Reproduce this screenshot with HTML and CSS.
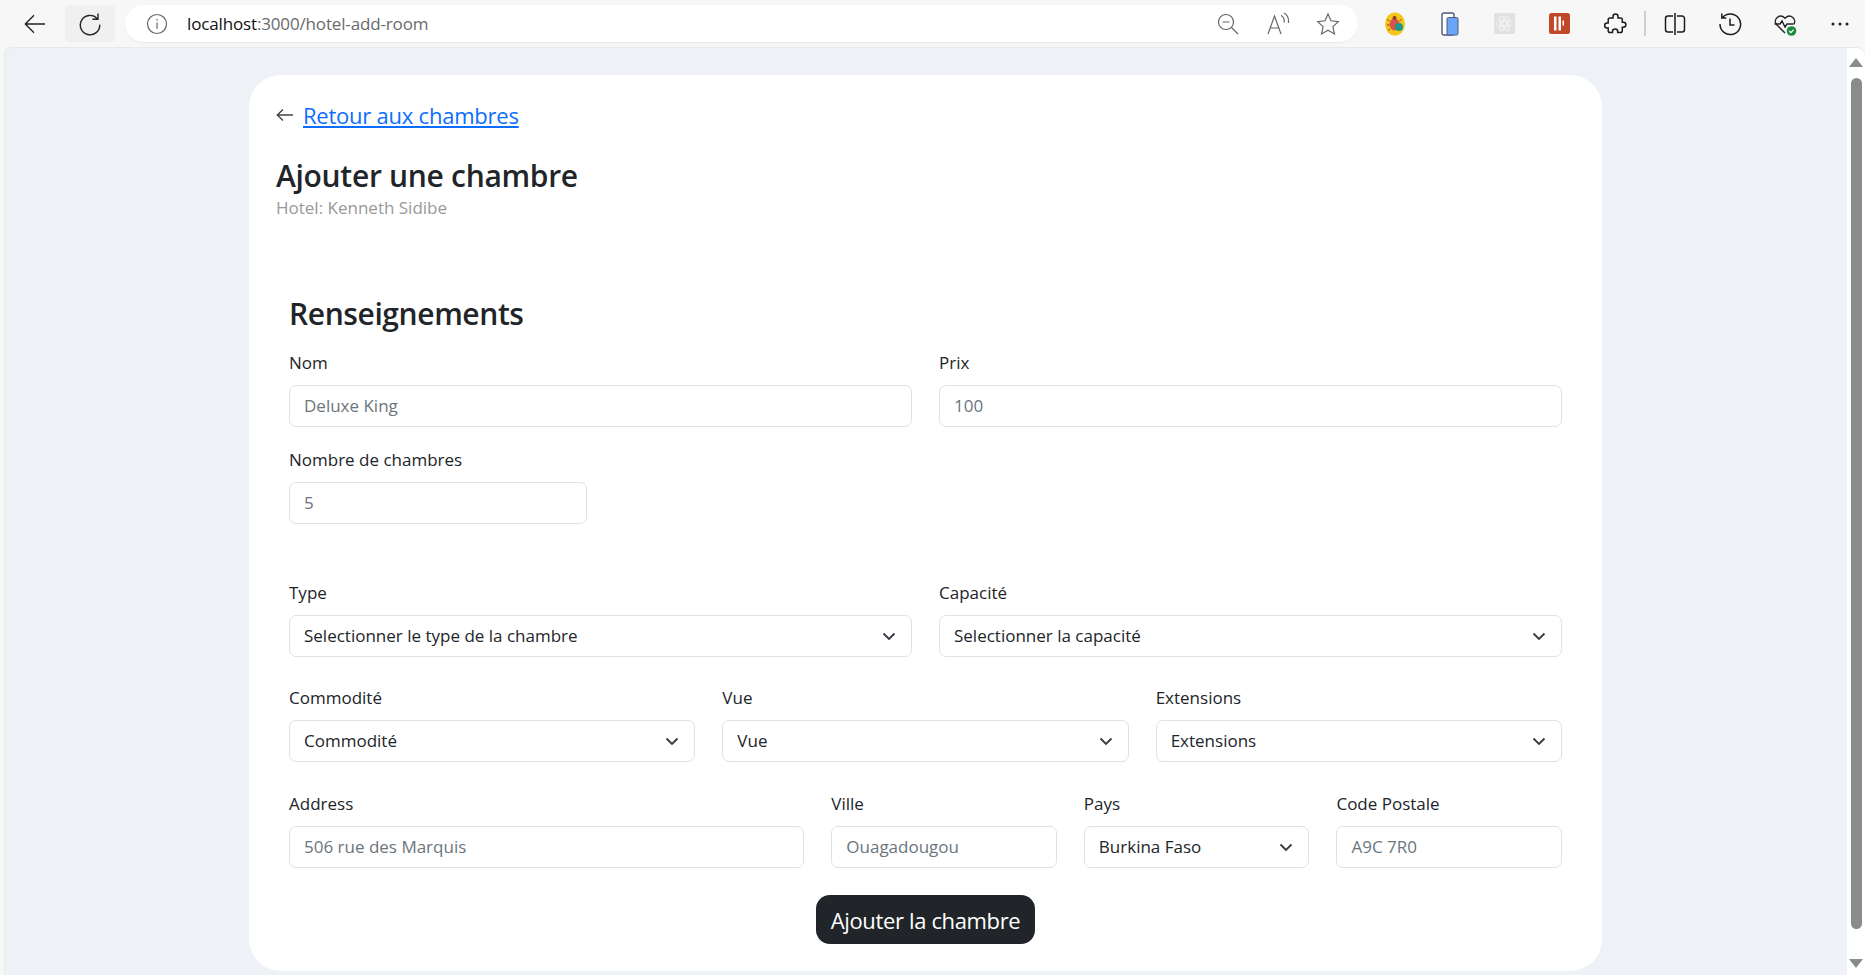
FILE: index.html
```html
<!DOCTYPE html>
<html lang="fr">
<head>
    <meta charset="UTF-8">
    <meta name="viewport" content="width=device-width, initial-scale=1.0">
    <title>Ajouter une chambre</title>
    <link rel="stylesheet" href="styles.css">
</head>
<body>
    <header class="toolbar">
        <div class="tool tool-back">
            <svg width="24" height="24" viewBox="0 0 24 24" class="ico"><path d="M22 12H2.500M11 3.200 2.300 12l8.700 8.800"/></svg>
        </div>
        <div class="tool tool-reload">
            <svg width="24" height="24" viewBox="0 0 24 24" class="ico"><path d="M19.200 6.600A9.700 9.700 0 1 0 21.700 12.600M20 1.600v5.600h-5.600"/></svg>
        </div>
        <div class="address">
            <svg width="22" height="22" viewBox="0 0 22 22" class="ico ico-grey"><circle cx="11" cy="11" r="9.500"/><path d="M11 9.600v6.200M11 6v1.500"/></svg>
            <span class="url"><b>localhost</b>:3000/hotel-add-room</span>
            <div class="address-tools">
                <div class="addr-tool">
                    <svg width="24" height="24" viewBox="0 0 24 24" class="ico ico-grey"><circle cx="10" cy="10" r="7.500"/><path d="M6.500 10h7M15.500 15.500l6.500 6.500"/></svg>
                </div>
                <div class="addr-tool">
                    <svg width="24" height="24" viewBox="0 0 24 24" class="ico ico-grey"><path d="M2 22 8.500 4l6.500 18M4.400 16h8.200M15 3.500c2.500 1.200 3.500 3.500 3.200 7M18 1c3.400 1.800 5 5.400 4.400 10"/></svg>
                </div>
                <div class="addr-tool">
                    <svg width="24" height="24" viewBox="0 0 24 24" class="ico ico-grey"><path d="m12 2 3 6.800 7.300.8-5.400 5 1.500 7.300L12 18.200l-6.400 3.700 1.500-7.300-5.400-5 7.300-.8z"/></svg>
                </div>
            </div>
        </div>
        <div class="tool">
            <svg width="22" height="24" viewBox="0 0 22 24"><ellipse cx="11" cy="12" rx="10" ry="11.500" fill="#f5c71a"/><ellipse cx="10.500" cy="12.500" rx="5" ry="6" fill="#d9534f"/><circle cx="10.500" cy="6" r="2" fill="#8a3b2e"/><path d="M5.500 9 3.300 7.500M5.500 13H3M6 17l-2 1.500M15.500 9l2-1.500" stroke="#8a3b2e" fill="none"/><circle cx="15" cy="15" r="4" fill="#1a9b8a"/></svg>
        </div>
        <div class="tool">
            <svg width="18" height="24" viewBox="0 0 18 24"><rect x="1" y="1" width="12" height="22" rx="2" fill="#fff" stroke="#4a5878" stroke-width="1.400"/><rect x="6" y="5.500" width="11" height="17.500" rx="1.500" fill="#6aa5f8" stroke="#4a5878" stroke-width="1"/></svg>
        </div>
        <div class="tool">
            <svg width="21" height="21" viewBox="0 0 21 21"><rect width="21" height="21" rx="1" fill="#e1e1e1"/><g fill="none" stroke="#f4f4f4"><ellipse cx="10.500" cy="10.500" rx="8" ry="3.200"/><ellipse cx="10.500" cy="10.500" rx="8" ry="3.200" transform="rotate(60 10.500 10.500)"/><ellipse cx="10.500" cy="10.500" rx="8" ry="3.200" transform="rotate(120 10.500 10.500)"/><circle cx="10.500" cy="10.500" r="2"/></g></svg>
        </div>
        <div class="tool">
            <svg width="21" height="21" viewBox="0 0 21 21"><rect width="21" height="21" rx="2.500" fill="#c0492a"/><path d="M5 3.500h2.500v14H5zM9.500 3.500H12v14H9.500zM13.500 7.500H15v5h-1.500z" fill="#fff"/></svg>
        </div>
        <div class="tool">
            <svg width="24" height="24" viewBox="0 0 24 24" class="ico ico-strong"><path d="M10 4.500c0-3.400 5-3.400 5 0V6h2.500a1.800 1.800 0 0 1 1.800 1.800v2.400h1c3.400 0 3.400 5 0 5h-1v3.500a1.800 1.800 0 0 1-1.800 1.800h-2.800v-1c0-3.200-5.200-3.200-5.200 0v1H7a1.800 1.800 0 0 1-1.800-1.800V16h-1c-3.400 0-3.400-5 0-5h1V7.800A1.800 1.800 0 0 1 7 6h3z"/></svg>
        </div>
        <span class="tool-sep"></span>
        <div class="tool">
            <svg width="24" height="24" viewBox="0 0 24 24" class="ico ico-strong"><path d="M10 4H5a2.500 2.500 0 0 0-2.500 2.500v11A2.500 2.500 0 0 0 5 20h5M14 4h5a2.500 2.500 0 0 1 2.500 2.500v11A2.500 2.500 0 0 1 19 20h-5M12 1v22"/></svg>
        </div>
        <div class="tool">
            <svg width="24" height="24" viewBox="0 0 24 24" class="ico ico-strong"><path d="M4.500 5.500A10.300 10.300 0 1 1 2 12M3.800 1.500v4.500h4.500M12 6.500v6.500h4.500"/></svg>
        </div>
        <div class="tool">
            <svg width="24" height="24" viewBox="0 0 24 24"><path d="M12 21 3.500 12.500C-.5 8 6.500 .5 12 6.200c5.500-5.700 12.500 1.800 8.500 6.300" fill="none" stroke="#222" stroke-width="1.400"/><path d="M1.500 12h5.500l2-3 3 6 2-3h6" fill="none" stroke="#222" stroke-width="1.400"/><circle cx="18.500" cy="19" r="4.800" fill="#1e8a3c"/><path d="m16.300 19 1.600 1.600 2.800-3" fill="none" stroke="#fff" stroke-width="1.200"/></svg>
        </div>
        <div class="tool">
            <svg width="20" height="6" viewBox="0 0 20 6" fill="#222"><circle cx="3" cy="3" r="1.500"/><circle cx="10" cy="3" r="1.500"/><circle cx="17" cy="3" r="1.500"/></svg>
        </div>
    </header>

    <div class="frame">
        <main class="viewport">
            <div class="card">
                <div class="back-row">
                    <svg width="18" height="14" viewBox="0 0 18 14" class="back-arrow"><path d="M17 7H1.500M7 1.500 1.300 7 7 12.500"/></svg>
                    <a href="#" class="back-link">Retour aux chambres</a>
                </div>
                <h1 class="title">Ajouter une chambre</h1>
                <p class="subtitle">Hotel: Kenneth Sidibe</p>

                <form class="room-form">
                    <h2 class="section-title">Renseignements</h2>

                    <div class="row row-2 row-first">
                        <div class="field">
                            <label for="nom">Nom</label>
                            <input id="nom" type="text" placeholder="Deluxe King">
                        </div>
                        <div class="field">
                            <label for="prix">Prix</label>
                            <input id="prix" type="text" placeholder="100">
                        </div>
                    </div>
                    <div class="row row-4">
                        <div class="field">
                            <label for="nombre">Nombre de chambres</label>
                            <input id="nombre" type="text" placeholder="5">
                        </div>
                    </div>

                    <div class="row row-2 row-spaced">
                        <div class="field">
                            <label for="type">Type</label>
                            <div class="select-box">
                                <select id="type"><option>Selectionner le type de la chambre</option></select>
                                <svg width="16" height="16" viewBox="0 0 16 16" class="chevron"><path d="m2.500 5.500 5.500 5.500 5.500-5.500"/></svg>
                            </div>
                        </div>
                        <div class="field">
                            <label for="capacite">Capacité</label>
                            <div class="select-box">
                                <select id="capacite"><option>Selectionner la capacité</option></select>
                                <svg width="16" height="16" viewBox="0 0 16 16" class="chevron"><path d="m2.500 5.500 5.500 5.500 5.500-5.500"/></svg>
                            </div>
                        </div>
                    </div>

                    <div class="row row-3">
                        <div class="field">
                            <label for="commodite">Commodité</label>
                            <div class="select-box">
                                <select id="commodite"><option>Commodité</option></select>
                                <svg width="16" height="16" viewBox="0 0 16 16" class="chevron"><path d="m2.500 5.500 5.500 5.500 5.500-5.500"/></svg>
                            </div>
                        </div>
                        <div class="field">
                            <label for="vue">Vue</label>
                            <div class="select-box">
                                <select id="vue"><option>Vue</option></select>
                                <svg width="16" height="16" viewBox="0 0 16 16" class="chevron"><path d="m2.500 5.500 5.500 5.500 5.500-5.500"/></svg>
                            </div>
                        </div>
                        <div class="field">
                            <label for="extensions">Extensions</label>
                            <div class="select-box">
                                <select id="extensions"><option>Extensions</option></select>
                                <svg width="16" height="16" viewBox="0 0 16 16" class="chevron"><path d="m2.500 5.500 5.500 5.500 5.500-5.500"/></svg>
                            </div>
                        </div>
                    </div>

                    <div class="row row-address">
                        <div class="field">
                            <label for="address">Address</label>
                            <input id="address" type="text" placeholder="506 rue des Marquis">
                        </div>
                        <div class="field">
                            <label for="ville">Ville</label>
                            <input id="ville" type="text" placeholder="Ouagadougou">
                        </div>
                        <div class="field">
                            <label for="pays">Pays</label>
                            <div class="select-box">
                                <select id="pays"><option>Burkina Faso</option></select>
                                <svg width="16" height="16" viewBox="0 0 16 16" class="chevron"><path d="m2.500 5.500 5.500 5.500 5.500-5.500"/></svg>
                            </div>
                        </div>
                        <div class="field">
                            <label for="code">Code Postale</label>
                            <input id="code" type="text" placeholder="A9C 7R0">
                        </div>
                    </div>

                    <div class="submit-row">
                        <button type="submit" class="submit-btn">Ajouter la chambre</button>
                    </div>
                </form>
            </div>
        </main>
        <aside class="scrollbar">
            <span class="arrow-up"></span>
            <span class="thumb"></span>
            <span class="arrow-down"></span>
        </aside>
    </div>
</body>
</html>
```

FILE: styles.css
```css
* {
    box-sizing: border-box;
}
html, body {
    height: 100%;
}
body {
    margin: 0;
    height: 975px;
    overflow: hidden;
    display: flex;
    flex-direction: column;
    background-color: #f7f7f7;
    color: #212529;
    font-family: "Open Sans", "Noto Sans", sans-serif;
}

/* browser toolbar */
.toolbar {
    height: 47px;
    flex: none;
    display: flex;
    align-items: center;
    padding-left: 8px;
}
.tool {
    width: 55px;
    height: 37px;
    flex: none;
    display: flex;
    align-items: center;
    justify-content: center;
}
.tool-back {
    width: 54px;
    margin-right: 3px;
}
.tool-reload {
    width: 50px;
    background-color: #f0f0f0;
    border-radius: 4px;
    margin-right: 10px;
}
.tool-sep {
    width: 2px;
    height: 25px;
    flex: none;
    margin: 0 1px 0 2px;
    background-color: #cfcfcf;
}
.ico {
    fill: none;
    stroke: #222;
    stroke-width: 1.4;
}
.ico-grey {
    stroke: #666;
    stroke-width: 1.2;
}
.ico-strong {
    stroke: #1c1c1c;
    stroke-width: 1.5;
}
.address {
    width: 1233px;
    height: 37px;
    flex: none;
    margin-right: 9px;
    display: flex;
    align-items: center;
    padding-left: 21px;
    padding-right: 5px;
    background-color: #fff;
    border-radius: 19px;
    box-shadow: 0 1px 2px rgba(0, 0, 0, 0.06);
}
.url {
    margin-left: 19px;
    font-size: 17px;
    letter-spacing: -0.15px;
    color: #6a6a6a;
}
.url b {
    font-weight: 400;
    color: #111;
}
.address-tools {
    margin-left: auto;
    display: flex;
}
.addr-tool {
    width: 50px;
    display: flex;
    justify-content: center;
}

/* page area */
.frame {
    flex: 1;
    min-height: 0;
    margin-left: 4px;
    display: flex;
    background-color: #eef1f6;
    border-radius: 8px 8px 0 0;
    border-top: 1px solid #e9e9e9;
    border-left: 1px solid #e9e9e9;
    overflow: hidden;
}
.viewport {
    flex: 1;
    min-width: 0;
    padding-top: 27px;
}
.card {
    width: 1353px;
    height: 896px;
    margin-left: 244px;
    padding: 24px 27px 0;
    background-color: #fff;
    border-radius: 32px;
}
.back-row {
    display: flex;
    align-items: center;
    gap: 9px;
    height: 32px;
}
.back-arrow {
    fill: none;
    stroke: #444;
    stroke-width: 1.4;
    margin-top: -1px;
}
.back-link {
    font-size: 22px;
    letter-spacing: -0.23px;
    color: #0d6efd;
}
.title {
    margin: 25px 0 0;
    font-size: 30px;
    line-height: 40px;
    font-weight: 600;
    letter-spacing: -0.3px;
}
.subtitle {
    margin: 1px 0 0;
    font-size: 17px;
    line-height: 22px;
    color: #999;
}

/* form */
.room-form {
    padding: 0 13px;
    margin-top: 75px;
}
.section-title {
    margin: 0;
    font-size: 30px;
    line-height: 40px;
    font-weight: 600;
    letter-spacing: -0.4px;
}
.row {
    display: grid;
    gap: 27px;
}
.row-first {
    margin-top: 17px;
}
.row-2 {
    grid-template-columns: 1fr 1fr;
}
.row-3 {
    grid-template-columns: repeat(3, 1fr);
    margin-top: 29px;
}
.row-4 {
    grid-template-columns: repeat(4, 1fr);
    margin-top: 21px;
}
.row-spaced {
    margin-top: 57px;
}
.row-address {
    grid-template-columns: 514fr 225fr 225fr 225fr;
    margin-top: 30px;
}
.field {
    display: flex;
    flex-direction: column;
    gap: 11px;
    min-width: 0;
}
label {
    font-size: 17px;
    line-height: 23px;
}
input, select {
    width: 100%;
    height: 42px;
    padding: 0 14px;
    border: 1px solid #dee2e6;
    border-radius: 7px;
    background-color: #fff;
    font-family: inherit;
    font-size: 17px;
    color: #212529;
    appearance: none;
    outline: none;
}
input {
    padding-bottom: 2px;
}
select {
    padding-bottom: 1px;
}
input::placeholder {
    color: #6c757d;
    opacity: 1;
}
.select-box {
    position: relative;
}
.chevron {
    position: absolute;
    top: 13px;
    right: 15px;
    fill: none;
    stroke: #343a40;
    stroke-width: 1.8;
    pointer-events: none;
}
.submit-row {
    display: flex;
    justify-content: center;
    margin-top: 27px;
}
.submit-btn {
    width: 219px;
    height: 49px;
    padding: 0;
    border: none;
    border-radius: 14px;
    background-color: #212529;
    color: #fff;
    font-family: inherit;
    font-size: 22px;
    letter-spacing: -0.35px;
}

/* fake scrollbar of the window */
.scrollbar {
    width: 18px;
    flex: none;
    position: relative;
    display: flex;
    flex-direction: column;
    align-items: center;
    padding: 10px 0 7px;
    background-color: #fff;
    border-top-right-radius: 8px;
}
.arrow-up, .arrow-down {
    width: 0;
    height: 0;
    flex: none;
    border-left: 7px solid transparent;
    border-right: 7px solid transparent;
}
.arrow-up {
    border-bottom: 9px solid #8b8b8b;
}
.arrow-down {
    border-top: 9px solid #8b8b8b;
}
.thumb {
    width: 11px;
    flex: 1;
    margin: 11px 0 30px;
    border-radius: 6px;
    background-color: #8b8b8b;
}
```
